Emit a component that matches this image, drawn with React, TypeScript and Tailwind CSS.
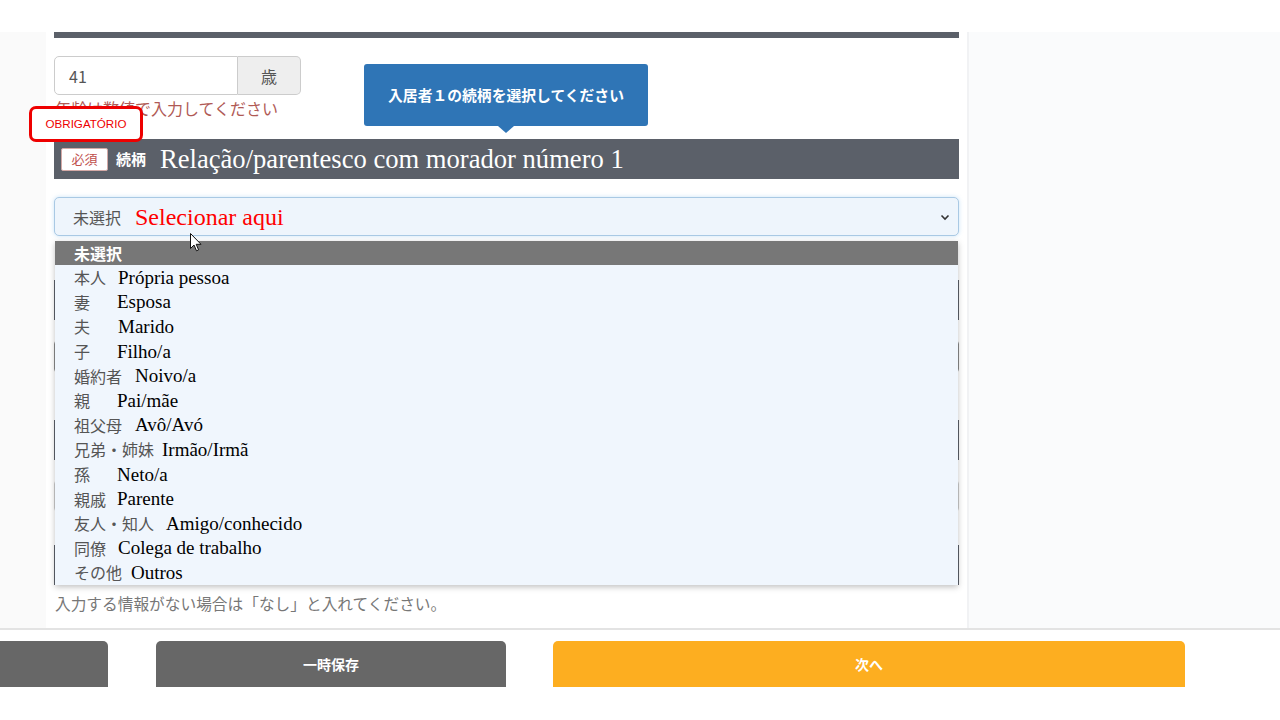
const items = [
  { jp: '本人', pt: 'Própria pessoa', w: 'w-[44px]' },
  { jp: '妻', pt: 'Esposa', w: 'w-[43px]' },
  { jp: '夫', pt: 'Marido', w: 'w-[44px]' },
  { jp: '子', pt: 'Filho/a', w: 'w-[43px]' },
  { jp: '婚約者', pt: 'Noivo/a', w: 'w-[61px]' },
  { jp: '親', pt: 'Pai/mãe', w: 'w-[43px]' },
  { jp: '祖父母', pt: 'Avô/Avó', w: 'w-[61px]' },
  { jp: '兄弟・姉妹', pt: 'Irmão/Irmã', w: 'w-[88px]' },
  { jp: '孫', pt: 'Neto/a', w: 'w-[43px]' },
  { jp: '親戚', pt: 'Parente', w: 'w-[43px]' },
  { jp: '友人・知人', pt: 'Amigo/conhecido', w: 'w-[92px]' },
  { jp: '同僚', pt: 'Colega de trabalho', w: 'w-[44px]' },
  { jp: 'その他', pt: 'Outros', w: 'w-[57px]' },
];

const sans = "font-['Noto_Sans_CJK_JP','Noto_Sans',sans-serif]";
const serif = "font-['Liberation_Serif',serif]";

function RelationDropdown() {
  return (
    <div className="absolute left-[55px] top-[241px] w-[903px] h-[344px] bg-[#f0f6fd] shadow-[0_2px_6px_rgba(0,0,0,0.25)]">
      <div className="h-[24px] bg-[#777777] pl-[19px] flex items-center text-white font-bold text-[16px] leading-none">
        未選択
      </div>
      {items.map((it) => (
        <div key={it.jp} className="h-[24.6px] pl-[19px] flex items-center">
          <span className={`${it.w} shrink-0 text-[16px] text-[#555555] leading-none`}>{it.jp}</span>
          <span className={`${serif} text-[19px] text-black leading-none`}>{it.pt}</span>
        </div>
      ))}
    </div>
  );
}

function Cursor() {
  return (
    <svg className="absolute left-[190px] top-[233px]" width="12" height="19" viewBox="0 0 12 19">
      <path d="M0.5 0.5 L0.5 15.5 L4 12 L6.5 17.8 L8.6 16.9 L6.2 11.3 L11 11.3 Z" fill="#fff" stroke="#111" strokeWidth="1" strokeLinejoin="round" />
    </svg>
  );
}

export default function App() {
  return (
    <div className={`${sans} w-[1280px] h-[720px] bg-white relative overflow-hidden`}>
      <div className="h-[32px] bg-white" />
      <div className="flex h-[596px]">
        <div className="w-[46px] bg-[#fafafa]" />
        <div className="w-[921px] bg-white px-[8px] flex flex-col">
          <div className="h-[6px] bg-[#5b6069]" />

          <div className="mt-[18px] h-[39px] w-[247px] flex">
            <div className="w-[184px] border border-[#cccccc] rounded-l-[5px] bg-white flex items-center pl-[14px] text-[16px] text-[#555555]">
              41
            </div>
            <div className="flex-1 border border-l-0 border-[#cccccc] rounded-r-[5px] bg-[#eeeeee] flex items-center justify-center text-[16px] text-[#555555]">
              歳
            </div>
          </div>
          <div className="mt-[3px] h-[20px] leading-[20px] pl-[1px] text-[16px] text-[#b05a55]">
            年齢は数値で入力してください
          </div>

          <div className="mt-[21px] h-[40px] bg-[#5b6069] flex items-center pl-[7px]">
            <span className="w-[47px] h-[23px] bg-white border border-[#d3a9a6] rounded-[2px] flex items-center justify-center text-[13px] text-[#c0504d]">
              必須
            </span>
            <span className="ml-[8px] text-[15px] font-bold text-white">続柄</span>
            <span className={`${serif} ml-[14px] text-[26.6px] text-white leading-none`}>
              Relação/parentesco com morador número 1
            </span>
          </div>

          <div className="mt-[18px] h-[39px] bg-[#eef5fc] border border-[#a9c9e4] rounded-[5px] shadow-[0_0_4px_rgba(102,175,233,0.35)] flex items-center pl-[18px] pr-[8px]">
            <span className="text-[16px] text-[#555555]">未選択</span>
            <span className={`${serif} ml-[14px] text-[24px] text-[#ff0000] leading-none`}>Selecionar aqui</span>
            <svg className="ml-auto" width="10" height="8" viewBox="0 0 10 8">
              <path d="M1.5 2.5 L5 6 L8.5 2.5" fill="none" stroke="#333" strokeWidth="1.6" />
            </svg>
          </div>

          <div className="mt-[44px] h-[40px] bg-[#5b6069]" />
          <div className="mt-[20px] h-[33px] border border-[#8a8a8a] rounded-[4px]" />
          <div className="mt-[47px] h-[40px] bg-[#5b6069]" />
          <div className="mt-[20px] h-[32px] border border-[#cccccc] rounded-[4px]" />
          <div className="mt-[33px] h-[40px] bg-[#5b6069]" />

          <div className="mt-[10px] h-[18px] leading-[18px] pl-[1px] text-[15.7px] text-[#777777]">
            入力する情報がない場合は「なし」と入れてください。
          </div>
        </div>
        <div className="flex-1 bg-[#fafbfc] border-l-2 border-[#f1f2f4]" />
      </div>

      <footer className="h-[92px] bg-white border-t-2 border-[#e3e3e3] flex pt-[11px]">
        <button className="w-[108px] h-[46px] bg-[#676767] rounded-tr-[5px]" />
        <button className="ml-[48px] w-[350px] h-[46px] bg-[#676767] rounded-t-[5px] text-white font-bold text-[14px]">
          一時保存
        </button>
        <button className="ml-[47px] w-[632px] h-[46px] bg-[#fdae20] rounded-t-[5px] text-white font-bold text-[14px]">
          次へ
        </button>
      </footer>

      <div className="absolute left-[364px] top-[64px] w-[284px] h-[62px] bg-[#2f75b6] rounded-[3px] flex items-center justify-center text-white font-bold text-[14.8px]">
        入居者１の続柄を選択してください
        <div className="absolute left-[134px] top-[62px] w-0 h-0 border-l-[8px] border-r-[8px] border-t-[7px] border-l-transparent border-r-transparent border-t-[#2f75b6]" />
      </div>

      <div className="absolute left-[29px] top-[106px] w-[114px] h-[36px] bg-white border-[3px] border-[#ee0000] rounded-[7px] flex items-center justify-center font-['Liberation_Sans',sans-serif] text-[11.6px] text-[#ee0000]">
        OBRIGATÓRIO
      </div>

      <RelationDropdown />
      <Cursor />
    </div>
  );
}
